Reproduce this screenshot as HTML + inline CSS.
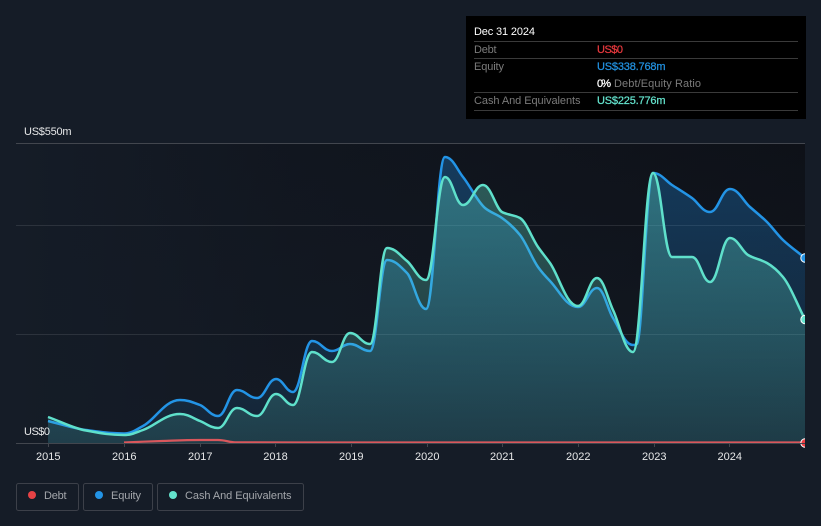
<!DOCTYPE html>
<html><head><meta charset="utf-8">
<style>
html,body{margin:0;padding:0;background:#151c27;width:821px;height:526px;overflow:hidden}
svg{display:block}
text{font-family:"Liberation Sans",Arial,sans-serif;font-size:11px}
.m{stroke-width:.25px}
</style></head><body>
<svg id="c" width="821" height="526" viewBox="0 0 821 526" xmlns="http://www.w3.org/2000/svg">
<defs>
<linearGradient id="bg" x1="0" y1="0" x2="1" y2="0"><stop offset="0" stop-color="#151c27"/><stop offset=".35" stop-color="#11161f"/><stop offset="1" stop-color="#0e1118"/></linearGradient>
<linearGradient id="bgb" x1="0" y1="0" x2="0" y2="1"><stop offset="0" stop-color="#151c27" stop-opacity="0"/><stop offset="1" stop-color="#151c27" stop-opacity=".6"/></linearGradient>
<linearGradient id="fb" gradientUnits="userSpaceOnUse" x1="0" y1="157" x2="0" y2="443"><stop offset="0" stop-color="#2196f3" stop-opacity=".3"/><stop offset="1" stop-color="#2196f3" stop-opacity=".08"/></linearGradient>
<linearGradient id="fc" gradientUnits="userSpaceOnUse" x1="0" y1="173" x2="0" y2="443"><stop offset="0" stop-color="#64e3cd" stop-opacity=".34"/><stop offset="1" stop-color="#64e3cd" stop-opacity=".13"/></linearGradient>
<clipPath id="pl"><rect x="16" y="130" width="789" height="330"/></clipPath>
</defs>
<rect x="16" y="144" width="789" height="299" fill="url(#bg)"/>
<rect x="16" y="144" width="789" height="299" fill="url(#bgb)"/>
<g stroke="#fff" stroke-opacity=".1"><path d="M16 225.500H805M16 334.500H805"/></g>
<path d="M16 143.500H805" stroke="#42464e"/>
<g clip-path="url(#pl)">
<path id="af" fill="url(#fb)"/>
<path id="bl" fill="none" stroke="#2394e6" stroke-width="2.500"/>
<path id="cf" fill="url(#fc)"/>
<path id="dl" fill="none" stroke="#d9575c" stroke-width="2.200"/>
<path id="cl" fill="none" stroke="#5fe0cb" stroke-width="2.500"/>
<circle cx="805" cy="258" r="4.200" fill="#2394e6" stroke="#fff" stroke-width="1"/>
<circle cx="805" cy="319.500" r="4.200" fill="#64e3cd" stroke="#fff" stroke-width="1"/>
<circle cx="805" cy="443" r="4.200" fill="#ee3f44" stroke="#fff" stroke-width="1"/>
</g>
<path d="M16 443.500H805" stroke="#42464e"/>
<path d="M48.500 443v4M124.500 443v4M200.500 443v4M275.500 443v4M351.500 443v4M427.500 443v4M502.500 443v4M578.500 443v4M654.500 443v4M729.500 443v4" stroke="#42464e"/>
<g fill="#e6e7e8">
<text x="24" y="135" textLength="47.500">US$550m</text>
<text x="24" y="435" textLength="26">US$0</text>
<text x="36" y="460" textLength="24.500">2015</text>
<text x="112" y="460" textLength="24.500">2016</text>
<text x="188" y="460" textLength="24.500">2017</text>
<text x="263.300" y="460" textLength="24.500">2018</text>
<text x="339" y="460" textLength="24.500">2019</text>
<text x="415" y="460" textLength="24.500">2020</text>
<text x="490" y="460" textLength="24.500">2021</text>
<text x="566" y="460" textLength="24.500">2022</text>
<text x="642" y="460" textLength="24.500">2023</text>
<text x="717.500" y="460" textLength="24.500">2024</text>
</g>
<rect x="466" y="16" width="340" height="103" fill="#000"/>
<path d="M474 41.500H798M474 58.500H798M474 92.500H798M474 110.500H798" stroke="#3a3a3a"/>
<text x="474" y="35" textLength="61" fill="#fff">Dec 31 2024</text>
<g fill="#7b7b7b">
<text x="474" y="53" textLength="22.500">Debt</text>
<text x="474" y="70" textLength="30">Equity</text>
<text x="474" y="104" textLength="106.500">Cash And Equivalents</text>
<text x="614" y="87" textLength="87">Debt/Equity Ratio</text>
</g>
<text class="m" x="597" y="53" textLength="26" fill="#e5383d" stroke="#e5383d">US$0</text>
<text class="m" x="597" y="70" textLength="68.500" fill="#2291e0" stroke="#2291e0">US$338.768m</text>
<text class="m" x="597" y="87" textLength="14" fill="#fff" stroke="#fff">0%</text>
<text class="m" x="597" y="104" textLength="68.500" fill="#64e3cd" stroke="#64e3cd">US$225.776m</text>
<g fill="none" stroke="#3c4049" stroke-width="1">
<rect x="16.500" y="483.500" width="62" height="27" rx="2"/>
<rect x="83.500" y="483.500" width="69" height="27" rx="2"/>
<rect x="157.500" y="483.500" width="146" height="27" rx="2"/>
</g>
<circle cx="32" cy="495" r="4" fill="#e64245"/>
<circle cx="99" cy="495" r="4" fill="#2394e6"/>
<circle cx="173" cy="495" r="4" fill="#64e3cd"/>
<g fill="#a3a6ab">
<text x="44" y="499" textLength="22.500">Debt</text>
<text x="111" y="499" textLength="30">Equity</text>
<text x="185" y="499" textLength="106.500">Cash And Equivalents</text>
</g>
</svg>
<script>
var E=[[48,421],[86,430],[124,433.5],[143,426],[180,400],[200,405],[218,416],[237,390],[257,398],[276,379],[293,392],[312,341],[332,351],[350,344],[370,351],[387,260],[407,273],[426,309],[445,157],[463,177],[485,208],[502,218],[520,235],[538,267],[550,281],[578,307],[597,288],[613,318],[633,345],[637,344],[653,173],[672,185],[692,198],[710,212],[730,189],[750,207],[767,222],[783,240],[805,258]];
var C=[[48,417],[86,430.5],[124,435],[143,430],[180,414],[200,421],[218,428],[237,408],[257,416],[276,394],[293,405],[312,352],[332,362],[350,333],[370,344],[387,248],[407,261],[426,280],[445,177],[463,205],[483,185],[502,212],[520,218],[538,247],[550,263],[578,306],[597,278],[613,310],[633,352],[653,173],[672,257],[692,257],[710,282],[730,238],[748,255],[767,263],[783,277],[805,319.5]];
var D=[[124,442.5],[162,441],[200,440],[218,440],[235,442.3],[300,442.5],[805,442.5]];
function mono(p){var n=p.length,m=[],i,s=[];for(i=0;i<n-1;i++)s[i]=(p[i+1][1]-p[i][1])/(p[i+1][0]-p[i][0]);
m[0]=s[0];m[n-1]=s[n-2];for(i=1;i<n-1;i++){if(s[i-1]*s[i]<=0)m[i]=0;else{m[i]=2*s[i-1]*s[i]/(s[i-1]+s[i]);}}
var d="M"+p[0][0]+" "+p[0][1];for(i=0;i<n-1;i++){var w=p[i+1][0]-p[i][0],h0=w*(m[i]===0?0.42:1/3),h1=w*(m[i+1]===0?0.42:1/3);d+="C"+(p[i][0]+h0).toFixed(1)+" "+(p[i][1]+m[i]*h0).toFixed(1)+" "+(p[i+1][0]-h1).toFixed(1)+" "+(p[i+1][1]-m[i+1]*h1).toFixed(1)+" "+p[i+1][0]+" "+p[i+1][1];}return d;}
function $(i){return document.getElementById(i)}
var e=mono(E),c=mono(C),d=mono(D);
$("bl").setAttribute("d",e);$("cl").setAttribute("d",c);$("dl").setAttribute("d",d);
$("af").setAttribute("d",e+"L805 443L48 443Z");$("cf").setAttribute("d",c+"L805 443L48 443Z");
</script>
</body></html>
